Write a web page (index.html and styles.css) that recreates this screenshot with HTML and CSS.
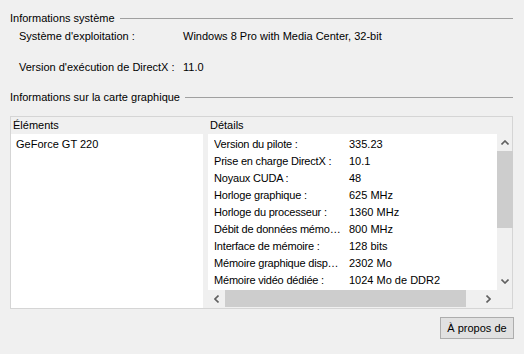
FILE: index.html
```html
<!DOCTYPE html>
<html lang="fr">
<head>
    <meta charset="UTF-8">
    <title>Outil de diagnostic</title>
    <link rel="stylesheet" href="styles.css">
</head>
<body>
    <div class="page">
        <div class="group-title"><span>Informations système</span><div class="rule"></div></div>
        <div class="sys-info">
            <div class="sys-row first"><span class="sys-label">Système d'exploitation :</span><span>Windows 8 Pro with Media Center, 32-bit</span></div>
            <div class="sys-row second"><span class="sys-label">Version d'exécution de DirectX :</span><span>11.0</span></div>
        </div>

        <div class="group-title gpu-title"><span>Informations sur la carte graphique</span><div class="rule"></div></div>

        <div class="panel">
            <div class="panel-head">
                <div class="head-cell">Éléments</div>
                <div class="head-cell details-head">Détails</div>
            </div>
            <div class="panel-body">
                <div class="items">
                    <div class="item">GeForce GT 220</div>
                </div>
                <div class="details">
                    <div class="details-list">
                        <div class="detail"><span class="key">Version du pilote :</span><span>335.23</span></div>
                        <div class="detail"><span class="key">Prise en charge DirectX :</span><span>10.1</span></div>
                        <div class="detail"><span class="key">Noyaux CUDA :</span><span>48</span></div>
                        <div class="detail"><span class="key">Horloge graphique :</span><span>625 MHz</span></div>
                        <div class="detail"><span class="key">Horloge du processeur :</span><span>1360 MHz</span></div>
                        <div class="detail"><span class="key">Débit de données mémoire :</span><span>800 MHz</span></div>
                        <div class="detail"><span class="key">Interface de mémoire :</span><span>128 bits</span></div>
                        <div class="detail"><span class="key">Mémoire graphique disponible totale :</span><span>2302 Mo</span></div>
                        <div class="detail"><span class="key">Mémoire vidéo dédiée :</span><span>1024 Mo de DDR2</span></div>
                    </div>
                    <div class="vscroll">
                        <div class="sb-btn"><svg width="8" height="5" viewBox="0 0 8 5"><polyline points="0.5,4.5 4,1 7.5,4.5" /></svg></div>
                        <div class="vthumb"></div>
                        <div class="sb-fill"></div>
                        <div class="sb-btn"><svg width="8" height="5" viewBox="0 0 8 5"><polyline points="0.5,0.5 4,4 7.5,0.5" /></svg></div>
                    </div>
                    <div class="hscroll">
                        <div class="sb-btn h"><svg width="5" height="8" viewBox="0 0 5 8"><polyline points="4.5,0.5 1,4 4.5,7.5" /></svg></div>
                        <div class="hthumb"></div>
                        <div class="sb-fill"></div>
                        <div class="sb-btn h"><svg width="5" height="8" viewBox="0 0 5 8"><polyline points="0.5,0.5 4,4 0.5,7.5" /></svg></div>
                    </div>
                    <div class="corner"></div>
                </div>
            </div>
        </div>

        <div class="actions">
            <button type="button">À propos de</button>
        </div>
    </div>
</body>
</html>
```

FILE: styles.css
```css
body {
    margin: 0;
    background-color: #f0f0f0;
    font-family: "Liberation Sans", Arial, sans-serif;
    font-size: 11px;
    color: #000;
}

.page {
    padding: 10px 11px 0 10px;
}

.group-title {
    display: flex;
    align-items: center;
    gap: 5px;
    height: 16px;
    line-height: 16px;
    white-space: nowrap;
}

.group-title .rule {
    flex: 1;
    border-top: 1px solid #a0a0a0;
    margin-top: 1px;
}

.sys-info {
    padding-left: 9px;
}

.sys-row {
    display: flex;
    height: 16px;
    line-height: 16px;
    white-space: nowrap;
}

.sys-row.first {
    margin-top: 2px;
}

.sys-row.second {
    margin-top: 15px;
}

.sys-label {
    flex: none;
    width: 164px;
}

.gpu-title {
    margin-top: 14px;
}

/* cadre de la carte graphique */
.panel {
    margin-top: 11px;
    border: 1px solid #d5d5d5;
    height: 191px;
    display: flex;
    flex-direction: column;
}

.panel-head {
    display: grid;
    grid-template-columns: 197px 305px;
    height: 17px;
    line-height: 17px;
}

.head-cell {
    padding-left: 2px;
}

.panel-body {
    flex: 1;
    display: grid;
    grid-template-columns: 192px 305px;
    gap: 5px;
}

.items {
    background-color: #fff;
    padding: 2px 0 0 5px;
}

.item,
.detail {
    height: 17px;
    line-height: 17px;
}

.details {
    display: grid;
    grid-template-columns: 289px 16px;
    grid-template-rows: 156px 17px;
}

.details-list {
    background-color: #fff;
    padding: 2px 0 0 6px;
    overflow: hidden;
}

.detail {
    display: flex;
    white-space: nowrap;
}

.key {
    flex: none;
    width: 128px;
    margin-right: 7px;
    letter-spacing: -0.2px;
    overflow: hidden;
    text-overflow: ellipsis;
}

.vscroll {
    display: flex;
    flex-direction: column;
}

.hscroll {
    display: flex;
}

.sb-btn {
    display: flex;
    align-items: center;
    justify-content: center;
    height: 17px;
}

.sb-btn.h {
    width: 17px;
    height: auto;
}

.sb-btn svg polyline {
    fill: none;
    stroke: #606060;
    stroke-width: 1.6;
}

.vthumb {
    height: 77px;
    background-color: #cdcdcd;
}

.hthumb {
    width: 241px;
    background-color: #cdcdcd;
}

.sb-fill {
    flex: 1;
}

.actions {
    display: flex;
    justify-content: flex-end;
    margin: 8px -1px 0 0;
}

button {
    font-family: inherit;
    font-size: 11px;
    width: 74px;
    height: 22px;
    padding: 0;
    background-color: #e1e1e1;
    border: 1px solid #adadad;
    color: #000;
}
```
